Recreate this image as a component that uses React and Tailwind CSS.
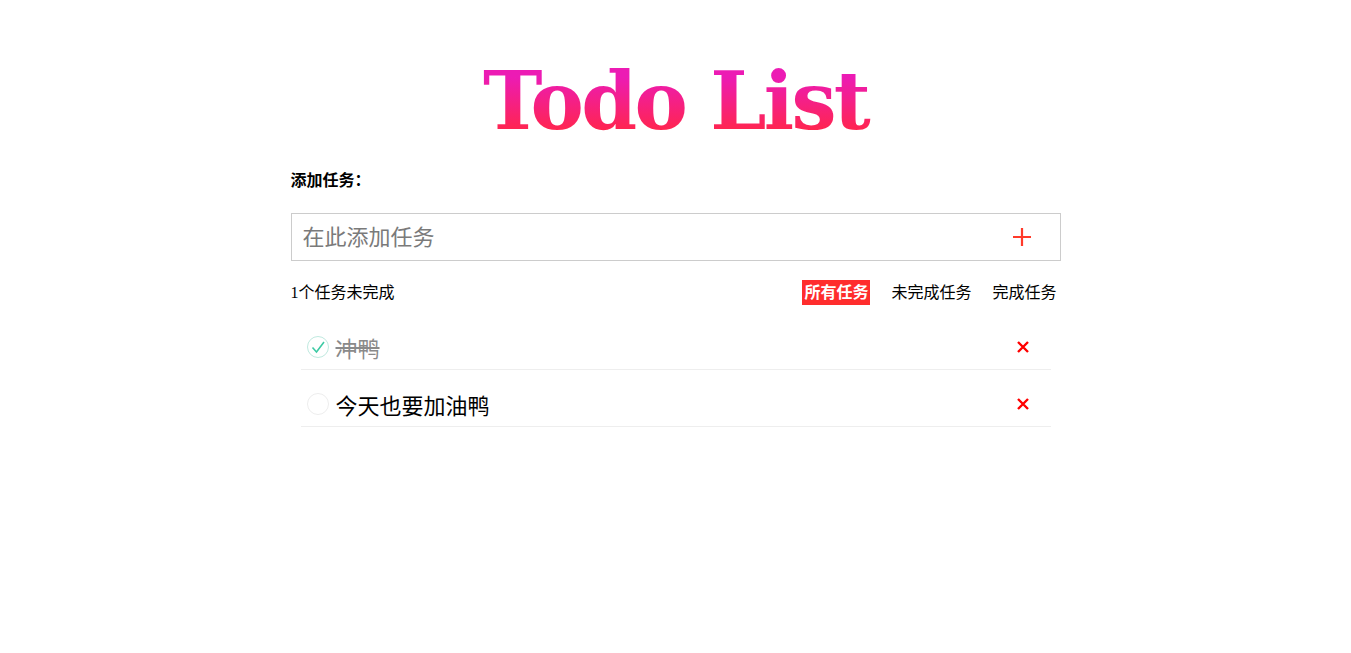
import { useState } from "react";

const todos0 = [
  { id: 1, text: "冲鸭", done: true },
  { id: 2, text: "今天也要加油鸭", done: false },
];

export default function App() {
  const [todos, setTodos] = useState(todos0);
  const [filter, setFilter] = useState("all");
  const left = todos.filter((t) => !t.done).length;

  const shown = todos.filter((t) =>
    filter === "all" ? true : filter === "active" ? !t.done : t.done
  );

  return (
    <div className="min-h-screen bg-white text-black font-['Liberation_Serif','Noto_Sans_CJK_SC',serif]">
      <main className="w-[770px] mx-auto pt-[53px]">
        {/* Title */}
        <h1 className="text-center text-[80px] leading-[96px] font-bold font-['DejaVu_Serif',serif] tracking-[-2.7px] bg-[linear-gradient(180deg,#ec1bb4_25%,#ff2550_80%)] bg-clip-text text-transparent">
          Todo List
        </h1>

        <div className="mt-[20px] text-[16px] leading-[24px] font-bold">添加任务：</div>

        {/* Input */}
        <div className="mt-[20px] h-[48px] border border-[#cccccc] flex items-center pl-[11px] pr-[27px]">
          <input
            className="flex-1 outline-none text-[22px] placeholder:text-[#7a7a7a] bg-transparent"
            placeholder="在此添加任务"
          />
          <button className="w-[22px] h-[22px] flex items-center justify-center">
            <svg width="20" height="20" viewBox="0 0 20 20">
              <path d="M10 1v18M1 10h18" stroke="#ff3a2a" strokeWidth="2.2" />
            </svg>
          </button>
        </div>

        {/* Status row */}
        <div className="mt-[19px] h-[25px] flex items-center justify-between text-[16px] pr-[4px]">
          <span>{left}个任务未完成</span>
          <div className="flex items-center gap-[21px]">
            <FilterBtn active={filter === "all"} onClick={() => setFilter("all")}>所有任务</FilterBtn>
            <FilterBtn active={filter === "active"} onClick={() => setFilter("active")}>未完成任务</FilterBtn>
            <FilterBtn active={filter === "done"} onClick={() => setFilter("done")}>完成任务</FilterBtn>
          </div>
        </div>

        {/* List */}
        <ul className="mt-[8px] px-[10px]">
          {shown.map((t) => (
            <li key={t.id} className="h-[57px] pt-[12px] border-b border-[#eeeeee] flex items-center pl-[6px] pr-[22px]">
              <button
                className="w-[22px] h-[22px] shrink-0"
                onClick={() => setTodos(todos.map((x) => (x.id === t.id ? { ...x, done: !x.done } : x)))}
              >
                <svg width="22" height="22" viewBox="0 0 22 22">
                  <circle cx="11" cy="11" r="10.5" fill="none" stroke={t.done ? "#bfe9df" : "#ededed"} strokeWidth="1" />
                  {t.done && <path d="M5.5 11.5l4 4.5L17 6" fill="none" stroke="#3dcaa4" strokeWidth="1.6" />}
                </svg>
              </button>
              <span className={"ml-[7px] flex-1 text-[22px] leading-[30px] font-['Noto_Sans_CJK_SC',sans-serif] " + (t.done ? "line-through text-[#8a8a8a]" : "text-black")}>
                {t.text}
              </span>
              <button onClick={() => setTodos(todos.filter((x) => x.id !== t.id))}>
                <svg width="12" height="12" viewBox="0 0 12 12">
                  <path d="M1 1l10 10M11 1L1 11" stroke="#ff0000" strokeWidth="2.4" />
                </svg>
              </button>
            </li>
          ))}
        </ul>
      </main>
    </div>
  );
}

function FilterBtn({ active, onClick, children }) {
  return (
    <button
      onClick={onClick}
      className={
        "h-[25px] text-[16px] leading-[25px] " +
        (active ? "px-[2px] bg-[#ff2d2d] text-white font-bold" : "px-0 text-black")
      }
    >
      {children}
    </button>
  );
}
